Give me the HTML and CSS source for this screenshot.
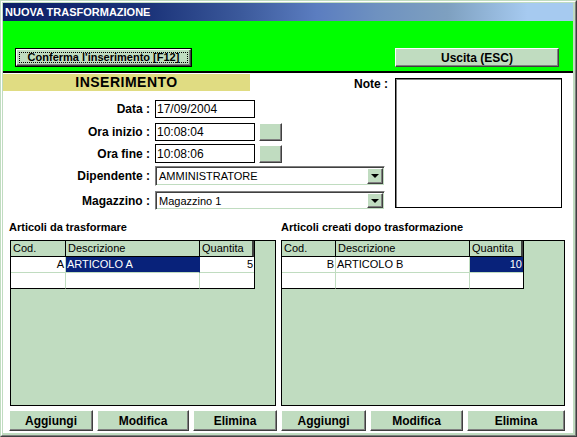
FILE: index.html
```html
<!DOCTYPE html>
<html lang="it">
<head>
<meta charset="utf-8">
<title>Nuova trasformazione</title>
<link rel="stylesheet" href="styles.css">
</head>
<body>
<div class="window">
  <div class="frame">
    <div class="titlebar">NUOVA TRASFORMAZIONE</div>
    <div class="toolbar">
      <button class="btn btn-default"><span class="face"><span class="focus">Conferma l'inserimento [F12]</span></span></button>
      <button class="btn raised btn-exit">Uscita (ESC)</button>
    </div>
    <div class="content">
      <div class="top">
        <div class="form">
          <div class="head-row">
            <div class="band">INSERIMENTO</div>
            <div class="note-label">Note :</div>
          </div>
          <div class="row r1"><span class="label">Data :</span><span class="input">17/09/2004</span></div>
          <div class="row r2"><span class="label">Ora inizio :</span><span class="input">10:08:04</span><span class="mini raised"></span></div>
          <div class="row r3"><span class="label">Ora fine :</span><span class="input">10:08:06</span><span class="mini raised"></span></div>
          <div class="row r4"><span class="label">Dipendente :</span><span class="combo"><span class="combo-text">AMMINISTRATORE</span><span class="combo-btn raised"><span class="arrow"></span></span></span></div>
          <div class="row r5"><span class="label">Magazzino :</span><span class="combo"><span class="combo-text">Magazzino 1</span><span class="combo-btn raised"><span class="arrow"></span></span></span></div>
        </div>
        <div class="note"></div>
      </div>
      <div class="bottom">
        <div class="col col-left">
          <div class="heading">Articoli da trasformare</div>
          <div class="panel">
            <div class="gt gt-left">
              <div class="th">Cod.</div><div class="th">Descrizione</div><div class="th th-last">Quantita</div>
              <div class="td num">A</div><div class="td sel">ARTICOLO A</div><div class="td num end">5</div>
              <div class="td bot"></div><div class="td bot"></div><div class="td bot end"></div>
            </div>
          </div>
          <div class="btns btns-left">
            <button class="btn raised">Aggiungi</button>
            <button class="btn raised">Modifica</button>
            <button class="btn raised">Elimina</button>
          </div>
        </div>
        <div class="col col-right">
          <div class="heading">Articoli creati dopo trasformazione</div>
          <div class="panel">
            <div class="gt gt-right">
              <div class="th">Cod.</div><div class="th">Descrizione</div><div class="th th-last">Quantita</div>
              <div class="td num">B</div><div class="td">ARTICOLO B</div><div class="td num end sel">10</div>
              <div class="td bot"></div><div class="td bot"></div><div class="td bot end"></div>
            </div>
          </div>
          <div class="btns btns-right">
            <button class="btn raised">Aggiungi</button>
            <button class="btn raised">Modifica</button>
            <button class="btn raised">Elimina</button>
          </div>
        </div>
      </div>
    </div>
  </div>
</div>
</body>
</html>
```
FILE: styles.css
```css
* { box-sizing: border-box; }
html, body { margin: 0; padding: 0; }
body {
  width: 577px;
  height: 437px;
  overflow: hidden;
  font-family: "Liberation Sans", Arial, sans-serif;
  color: #000;
  background: #c0dcc0;
}
.window {
  width: 577px;
  height: 437px;
  border: 1px solid;
  border-color: #c0dcc0 #404040 #404040 #c0dcc0;
}
.frame {
  height: 100%;
  display: flex;
  flex-direction: column;
  border: 1px solid;
  border-color: #fff #808080 #808080 #fff;
  padding: 1px 2px 2px 1px;
  background: #c0dcc0;
}
.titlebar {
  height: 18px;
  line-height: 18px;
  padding-left: 2px;
  color: #fff;
  font-weight: bold;
  font-size: 11px;
  background: linear-gradient(to right, #0c1f66 0%, #1a3278 25%, #3c5a9c 42%, #5b7dc0 55%, #6f92c0 66%, #7ea0c0 78%, #a6caf0 92%, #a6caf0 100%);
}
.toolbar {
  height: 52px;
  flex: none;
  background: #00ff00;
  border-bottom: 2px solid #000;
  display: flex;
  justify-content: space-between;
  align-items: flex-start;
  padding: 27px 14px 0 12px;
}
.btn {
  font-family: inherit;
  font-weight: bold;
  font-size: 12px;
  color: #000;
  margin: 0;
  padding: 0;
  background: #c0dcc0;
  cursor: default;
}
.raised {
  background: #c0dcc0;
  border: 1px solid;
  border-color: #fff #404040 #404040 #fff;
  box-shadow: inset -1px -1px #808080;
}
.btn-default {
  width: 177px;
  height: 19px;
  border: 1px solid #000;
  font-size: 11px;
  display: flex;
}
.btn-default .face {
  flex: 1;
  display: flex;
  padding: 2px 2px;
  border: 1px solid;
  border-color: #fff #404040 #404040 #fff;
  box-shadow: inset -1px -1px #808080;
}
.btn-default .focus {
  flex: 1;
  border: 1px dotted #000;
  display: flex;
  align-items: center;
  justify-content: center;
  line-height: 11px;
}
.btn-exit {
  width: 164px;
  height: 19px;
}
.content {
  flex: 1;
  background: #fff;
}
.top { display: flex; }
.form { width: 392px; }
.head-row {
  height: 18px;
  display: flex;
  justify-content: space-between;
}
.band {
  margin-top: 1px;
  width: 247px;
  height: 17px;
  line-height: 17px;
  background: #e0dc82;
  text-align: center;
  font-weight: bold;
  font-size: 14px;
  letter-spacing: 0.5px;
}
.note-label {
  padding: 3px 7px 0 0;
  font-weight: bold;
  font-size: 12px;
  line-height: 17px;
}
.row { display: flex; align-items: center; }
.r1 { margin-top: 9px; height: 18px; }
.r2 { margin-top: 5px; height: 18px; }
.r3 { margin-top: 3px; height: 19px; }
.r4 { margin-top: 3px; height: 20px; }
.r5 { margin-top: 5px; height: 19px; }
.label {
  width: 152px;
  padding-right: 5px;
  text-align: right;
  font-weight: bold;
  font-size: 12px;
  white-space: nowrap;
}
.input {
  width: 100px;
  height: 100%;
  border: 1px solid #000;
  padding-left: 1px;
  font-size: 12px;
  display: flex;
  align-items: center;
}
.mini {
  width: 23px;
  height: 18px;
  margin-left: 4px;
}
.combo {
  width: 230px;
  height: 100%;
  display: flex;
  align-items: center;
  border: 1px solid;
  border-color: #808080 #fff #fff #808080;
  box-shadow: inset 1px 1px #404040, inset -1px -1px #c0dcc0;
  padding: 1px 1px 1px 3px;
  font-size: 11px;
}
.combo-text { flex: 1; }
.combo-btn {
  width: 16px;
  height: 100%;
  display: flex;
  align-items: center;
  justify-content: center;
}
.arrow {
  width: 0;
  height: 0;
  border-left: 4px solid transparent;
  border-right: 4px solid transparent;
  border-top: 4px solid #000;
}
.note {
  margin-top: 5px;
  width: 167px;
  height: 130px;
  border: 1px solid #000;
  box-shadow: inset 1px 1px #808080;
}
.bottom {
  margin-top: 10px;
  padding-left: 6px;
  display: flex;
  gap: 4px;
}
.col { display: flex; flex-direction: column; }
.col-left { width: 268px; }
.col-right { width: 284px; }
.heading {
  height: 14px;
  line-height: 14px;
  font-size: 11px;
  font-weight: bold;
  white-space: nowrap;
  margin-bottom: 6px;
}
.panel {
  height: 166px;
  border: 1px solid #000;
  background: #c0dcc0;
}
.col-left .panel { margin: 0 1px; }
.gt {
  display: grid;
  width: max-content;
  border-right: 1px solid #000;
  font-size: 11px;
}
.gt-left { grid-template-columns: 55px 134px 54px; }
.gt-right { grid-template-columns: 54px 134px 53px; }
.th {
  height: 16px;
  line-height: 15px;
  padding-left: 2px;
  background: #c0dcc0;
  border-right: 1px solid #000;
  border-bottom: 1px solid #000;
  white-space: nowrap;
  overflow: hidden;
}
.th-last { border-right: 2px solid #404040; }
.td {
  height: 16px;
  line-height: 15px;
  padding: 0 1px 0 1px;
  background: #fff;
  border-right: 1px solid #c0dcc0;
  border-bottom: 1px solid #c0dcc0;
  white-space: nowrap;
  overflow: hidden;
}
.td.end { border-right: none; }
.td.bot { border-bottom-color: #000; }
.num { text-align: right; }
.sel {
  background: #08227a;
  color: #fff;
  border-right-color: #08227a;
}
.btns {
  margin-top: 4px;
  height: 21px;
  display: grid;
  column-gap: 4px;
}
.btns-left { grid-template-columns: 84px 92px 1fr; }
.btns-right { grid-template-columns: 85px 93px 1fr; }
.btns .btn { height: 21px; }
```
